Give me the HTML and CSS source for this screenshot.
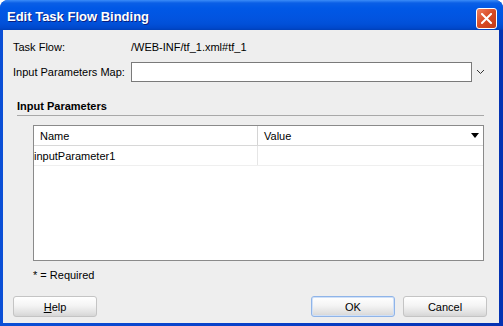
FILE: index.html
```html
<!DOCTYPE html>
<html lang="en">
<head>
    <meta charset="UTF-8">
    <title>Edit Task Flow Binding</title>
    <link rel="stylesheet" href="styles.css">
</head>
<body>

<div class="window">
    <div class="titlebar">
        <span class="title">Edit Task Flow Binding</span>
        <button class="close" title="Close">
            <svg width="11" height="11" viewBox="0 0 11 11">
                <path d="M1 1 L10 10 M10 1 L1 10" stroke="#fff" stroke-width="2" stroke-linecap="square"/>
            </svg>
        </button>
    </div>

    <div class="client">
        <div class="form">
            <span class="label">Task Flow:</span>
            <span class="value">/WEB-INF/tf_1.xml#tf_1</span>
            <span></span>

            <span class="label">Input Parameters Map:</span>
            <input type="text" class="map-input">
            <span class="chevron">
                <svg width="9" height="6" viewBox="0 0 9 6">
                    <path d="M1 1 L4.5 4.5 L8 1" fill="none" stroke="#333" stroke-width="1"/>
                </svg>
            </span>
        </div>

        <div class="section">
            <div class="section-title">Input Parameters</div>
            <div class="table">
                <div class="row head">
                    <div class="cell name">Name</div>
                    <div class="cell val">Value
                        <svg class="sort" width="8" height="5" viewBox="0 0 8 5"><path d="M0 0 H8 L4 5 Z" fill="#000"/></svg>
                    </div>
                </div>
                <div class="row">
                    <div class="cell name first">inputParameter1</div>
                    <div class="cell val"></div>
                </div>
            </div>
            <div class="note">* = Required</div>
        </div>

        <div class="buttons">
            <button class="btn"><u>H</u>elp</button>
            <span class="spacer"></span>
            <button class="btn default">OK</button>
            <button class="btn">Cancel</button>
        </div>
    </div>
</div>

</body>
</html>
```

FILE: styles.css
```css
body {
    margin: 0;
    font-family: "Liberation Sans", Arial, sans-serif;
    font-size: 11px;
    color: #000;
    background: #fff;
}
.window {
    width: 503px;
    height: 326px;
    display: flex;
    flex-direction: column;
    background: linear-gradient(to right, #0a4fd6, #0840c8 50%, #0432b2);
    border-radius: 8px 8px 0 0;
    box-sizing: border-box;
    padding: 0 4px 3px 3px;
}
.titlebar {
    height: 30px;
    margin: 0 -4px 0 -3px;
    border-radius: 8px 8px 0 0;
    background: linear-gradient(to bottom, #3b8cf8 0, #0a5fe6 3px, #0058e6 8px, #0254e0 18px, #0150d8 24px, #0048cc 28px, #0040b8 30px);
    display: flex;
    align-items: center;
    padding: 0 6px 0 7px;
}
.title {
    flex: 1;
    color: #fff;
    font-weight: bold;
    font-size: 13px;
    text-shadow: 1px 1px 0 #0a1f80;
    padding-top: 2px;
}
.close {
    width: 21px;
    height: 21px;
    margin-top: 7px;
    padding: 0;
    border: 1px solid #fff;
    border-radius: 3px;
    background: linear-gradient(135deg, #f08060, #d84a24 50%, #c43c18);
    display: flex;
    align-items: center;
    justify-content: center;
}
.client {
    flex: 1;
    background: #eeeeee;
    padding: 10px 0 0 10px;
    display: flex;
    flex-direction: column;
}
.form {
    display: grid;
    grid-template-columns: 118px 341px 1fr;
    row-gap: 8px;
    align-items: center;
}
.label, .value {
    line-height: 14px;
}
.map-input {
    height: 20px;
    box-sizing: border-box;
    border: 1px solid #7a7a7a;
    background: #fff;
    margin: 0;
    font: inherit;
}
.chevron {
    padding-left: 4px;
    display: flex;
    align-items: center;
}
.section {
    margin: 17px 15px 0 4px;
}
.section-title {
    font-weight: bold;
    line-height: 14px;
    padding-bottom: 2px;
    border-bottom: 1px solid #a8a8a8;
}
.table {
    margin: 9px 0 0 16px;
    height: 136px;
    box-sizing: border-box;
    border: 1px solid #8a8a8a;
    background: #fff;
}
.row {
    display: flex;
    height: 20px;
    border-bottom: 1px solid #efefef;
    box-sizing: border-box;
}
.row.head {
    border-bottom: 1px solid #d8d8d8;
}
.cell {
    display: flex;
    align-items: center;
    box-sizing: border-box;
}
.cell.name {
    width: 224px;
    padding-left: 6px;
    border-right: 1px solid #e6e6e6;
}
.cell.name.first {
    padding-left: 0;
}
.cell.val {
    flex: 1;
    padding-left: 6px;
}
.head .cell.name {
    border-right-color: #d4d4d4;
}
.sort {
    margin-left: auto;
    margin-right: 4px;
}
.note {
    margin: 7px 0 0 16px;
    line-height: 14px;
}
.buttons {
    display: flex;
    margin-top: 14px;
    padding-right: 12px;
    gap: 8px;
}
.spacer {
    flex: 1;
}
.btn {
    width: 84px;
    height: 21px;
    padding: 0;
    font: inherit;
    color: #000;
    border: 1px solid #c4c4c4;
    border-radius: 3px;
    background: linear-gradient(to bottom, #ffffff, #f4f4f4 45%, #e2e2e2 80%, #d6d6d6);
}
.btn.default {
    border-color: #8fb4e8;
    box-shadow: inset 0 0 0 1px #cfe0f8;
}
```
